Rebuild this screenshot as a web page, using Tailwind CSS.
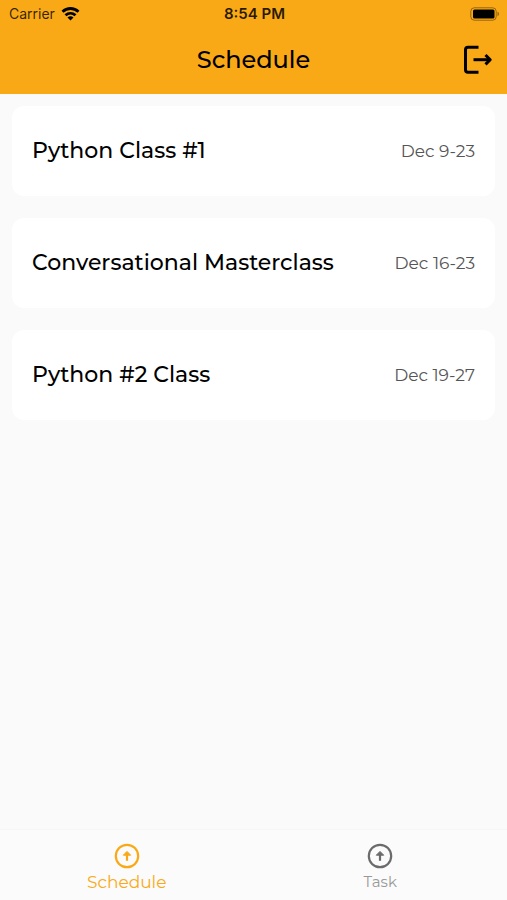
<!DOCTYPE html>
<html lang="en">
<head>
    <meta charset="UTF-8">
    <meta name="viewport" content="width=device-width, initial-scale=1.0">
    <title>Schedule</title>
    <script src="https://cdn.jsdelivr.net/npm/@tailwindcss/browser@4"></script>
</head>
<body class="bg-[#fafafa] text-black min-h-screen flex flex-col font-[Montserrat,Inter,sans-serif]">
    <header class="bg-[#faa916]">
        <!-- Status bar -->
        <div class="grid grid-cols-3 items-center h-7 pl-[9px] pr-[7px] text-sm font-[Inter,sans-serif]">
            <div class="flex items-center gap-1.5 text-black/80">
                <span>Carrier</span>
                <svg class="w-[19px] h-[14px] text-black" viewBox="0 0 18 14" fill="none" stroke="currentColor" stroke-width="2.800">
                    <path d="M1 4.800C5.500 .4 12.500 .4 17 4.800"/>
                    <path d="M4 8.300c2.900-2.700 7.100-2.700 10 0"/>
                    <path d="M9 13.400l-3-3c1.700-1.500 4.300-1.500 6 0z" fill="currentColor" stroke="none"/>
                </svg>
            </div>
            <span class="text-center text-[15px] font-semibold text-black/85">8:54 PM</span>
            <svg class="justify-self-end w-[30px] h-[14px]" viewBox="0 0 30 14">
                <rect x=".8" y=".8" width="25.400" height="12.400" rx="3.500" fill="none" stroke="#000" stroke-opacity=".4"/>
                <rect x="3" y="2.500" width="21.500" height="9" rx="1.500"/>
                <path d="M27.500 4.800c2 .6 2 3.800 0 4.400z" fill-opacity=".4"/>
            </svg>
        </div>
        <div class="grid grid-cols-[1fr_auto_1fr] items-center h-[66px] pb-0.5 px-[14px]">
            <h1 class="col-start-2 text-2xl font-medium">Schedule</h1>
            <button type="button" aria-label="Log out" class="justify-self-end">
                <svg class="block w-8 h-8" viewBox="0 0 32 32" fill="none" stroke="#000" stroke-width="3" stroke-linejoin="round">
                    <path d="M17.500 3.200H7q-2.500 0-2.500 2.500v20q0 2.500 2.500 2.500h10.500"/>
                    <path d="M12.500 15.700H29"/>
                    <path d="M24.500 11l4.700 4.700-4.700 4.700"/>
                </svg>
            </button>
        </div>
    </header>

    <main class="flex-1 px-3 pt-3">
        <ul class="flex flex-col gap-[22px]">
            <li class="flex items-center justify-between h-[90px] px-5 bg-white rounded-xl">
                <h2 class="text-[22px] font-medium pb-0.5">Python Class #1</h2>
                <span class="text-[17px] text-[#555] pt-0.5">Dec 9-23</span>
            </li>
            <li class="flex items-center justify-between h-[90px] px-5 bg-white rounded-xl">
                <h2 class="text-[22px] font-medium pb-0.5">Conversational Masterclass</h2>
                <span class="text-[17px] text-[#555] pt-0.5">Dec 16-23</span>
            </li>
            <li class="flex items-center justify-between h-[90px] px-5 bg-white rounded-xl">
                <h2 class="text-[22px] font-medium pb-0.5">Python #2 Class</h2>
                <span class="text-[17px] text-[#555] pt-0.5">Dec 19-27</span>
            </li>
        </ul>
    </main>

    <!-- Bottom tabs -->
    <nav class="grid grid-cols-2 h-[71px] bg-[#fbfbfb] border-t border-[#f6f6f6]">
        <a href="#schedule" aria-current="page" class="flex flex-col items-center pt-3 text-[#faa916]">
            <svg class="w-7 h-7" viewBox="0 0 28 28" fill="none" stroke="currentColor" stroke-width="2.200">
                <circle cx="14" cy="14" r="11.200"/>
                <path d="M14 18.800V11"/>
                <path d="M14 9.400l3.700 3.800h-7.400z" fill="currentColor" stroke-width="1"/>
            </svg>
            <span class="text-[17px] leading-6">Schedule</span>
        </a>
        <a href="#task" class="flex flex-col items-center pt-3 text-[#999]">
            <svg class="w-7 h-7 text-[#6b6b6b]" viewBox="0 0 28 28" fill="none" stroke="currentColor" stroke-width="2.200">
                <circle cx="14" cy="14" r="11.200"/>
                <path d="M14 18.800V11"/>
                <path d="M14 9.400l3.700 3.800h-7.400z" fill="currentColor" stroke-width="1"/>
            </svg>
            <span class="text-[15px] leading-6">Task</span>
        </a>
    </nav>
</body>
</html>
